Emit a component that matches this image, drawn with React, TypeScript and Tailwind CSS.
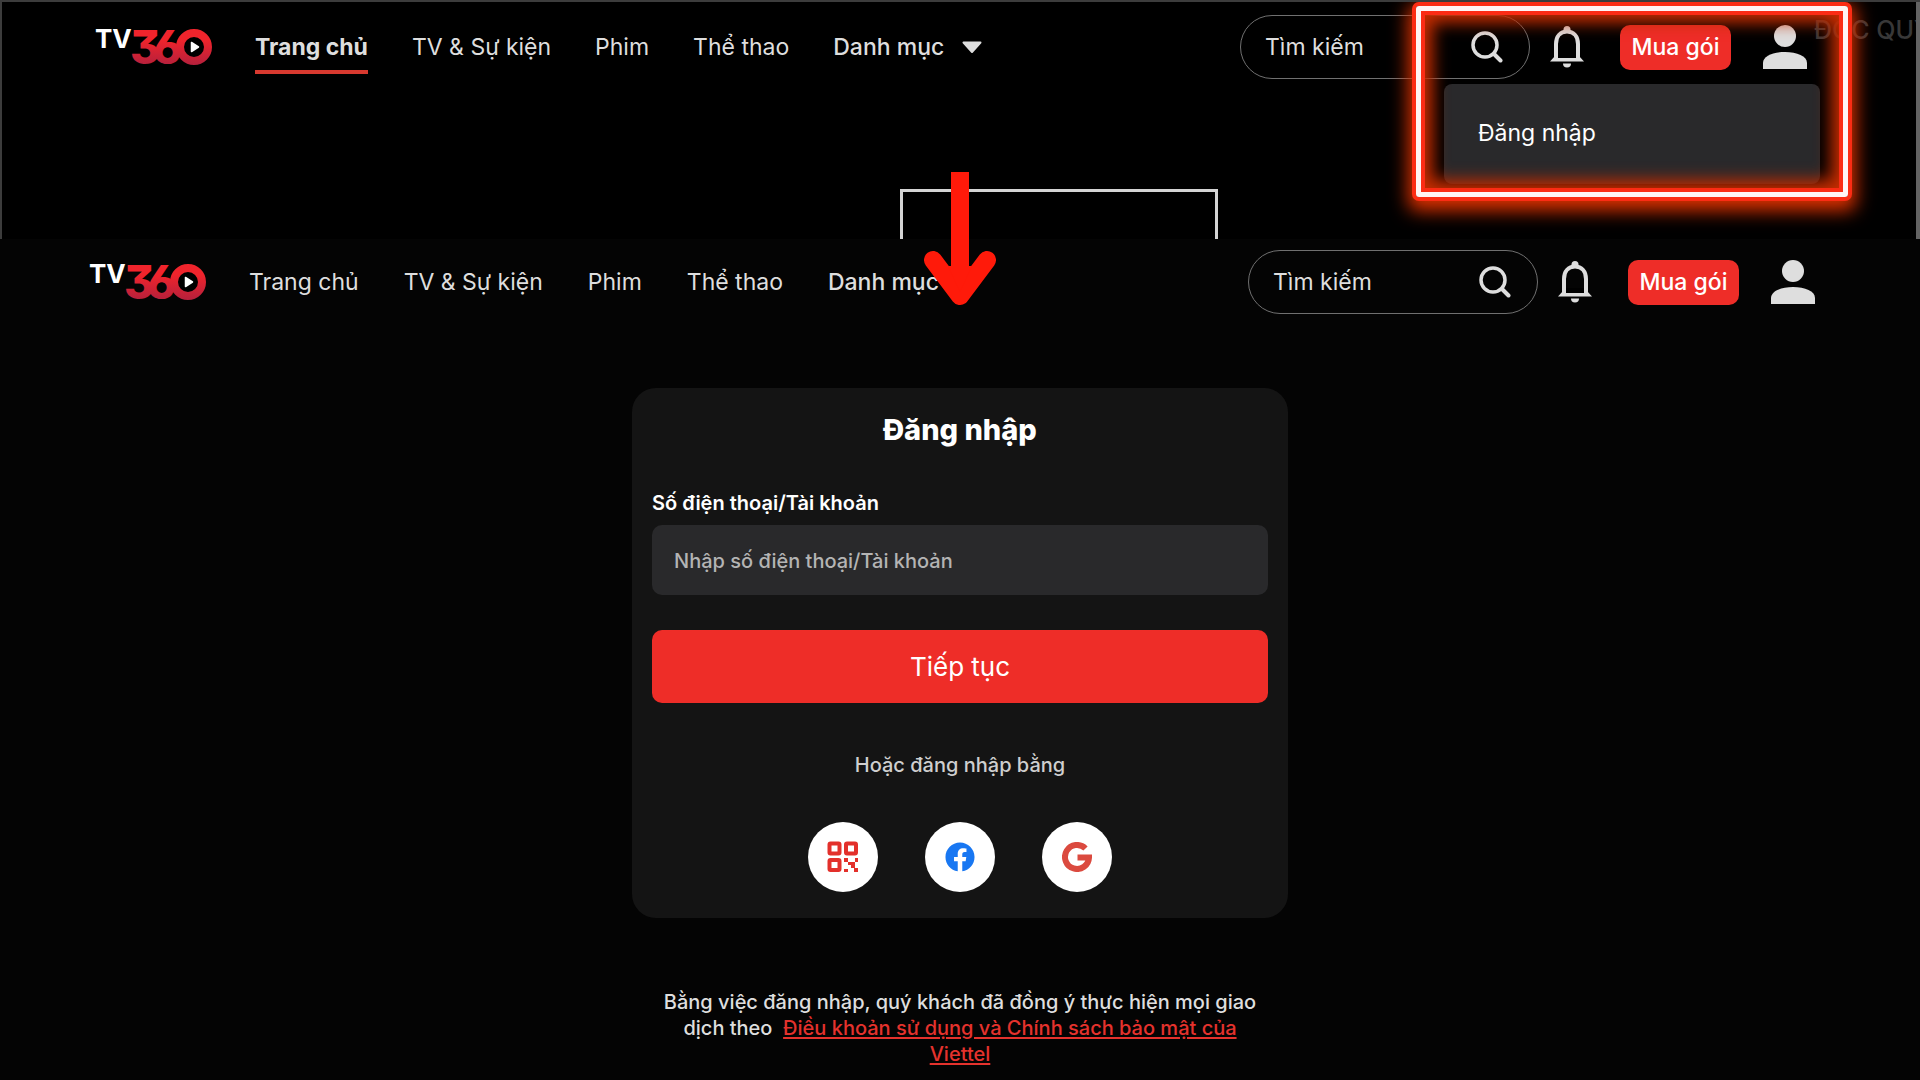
import { FaFacebook } from "react-icons/fa";

interface NavLink {
  label: string;
  strong?: boolean;
}

const links: NavLink[] = [
  { label: "Trang chủ" },
  { label: "TV & Sự kiện" },
  { label: "Phim" },
  { label: "Thể thao" },
  { label: "Danh mục", strong: true },
];

function Logo({ id }: { id: string }) {
  return (
    <svg width="116" height="40" viewBox="0 0 116 40" overflow="visible" role="img" aria-label="TV360">
      <defs>
        <linearGradient id={id} x1="0" y1="2" x2="0" y2="38" gradientUnits="userSpaceOnUse">
          <stop offset="0.3" stopColor="#f0242c" />
          <stop offset="1" stopColor="#b5203c" />
        </linearGradient>
      </defs>
      <text x="-1" y="21" fontFamily="Inter, sans-serif" fontSize="26" fontWeight="700" fill="#fff">
        TV
      </text>
      <text
        x="34 57"
        y="37"
        fontFamily="Inter, sans-serif"
        fontSize="46"
        fontWeight="800"
        fill={`url(#${id})`}
        style={{ fontFeatureSettings: '"cv09", "ss01"' }}
      >
        36
      </text>
      <circle cx="98" cy="20" r="14" fill="#000" stroke={`url(#${id})`} strokeWidth="8" />
      <path d="M95.500 15.500v9l7-4.500z" fill="#fff" stroke="#fff" strokeWidth="1.500" strokeLinejoin="round" />
    </svg>
  );
}

function SearchIcon() {
  return (
    <svg width="32" height="32" viewBox="0 0 32 32" fill="none" stroke="#dedede" aria-hidden="true">
      <circle cx="14" cy="14" r="12" strokeWidth="3.500" />
      <path d="M23 23l6.500 6.500" strokeWidth="4" strokeLinecap="round" />
    </svg>
  );
}

function BellIcon() {
  return (
    <svg width="34" height="42" viewBox="0 0 34 42" fill="none" aria-hidden="true">
      <path
        d="M6 32V18C6 10 10.500 5.500 17 5.500S28 10 28 18v14"
        stroke="#dedede"
        strokeWidth="4"
      />
      <path d="M0 35.500L5 30h24l5 5.500z" fill="#dedede" />
      <path d="M8 27h18v5H8z" fill="#000" />
      <path d="M13.500 6V3.500a3.500 3.500 0 017 0V6z" fill="#dedede" />
      <path d="M13 37.500h8a4 4 0 01-8 0z" fill="#dedede" />
    </svg>
  );
}

function UserIcon() {
  return (
    <svg width="44" height="44" viewBox="0 0 44 44" fill="#dedede" aria-hidden="true">
      <circle cx="22" cy="11" r="11" />
      <path d="M0 44V38C0 31 10 27 22 27s22 4 22 11v6z" />
    </svg>
  );
}

function QrIcon() {
  return (
    <svg width="32" height="32" viewBox="0 0 32 32" aria-hidden="true">
      <g fill="none" stroke="#e3302b" strokeWidth="4">
        <rect x="2.500" y="2.500" width="10" height="10" rx="1" />
        <rect x="19" y="2.500" width="10" height="10" rx="1" />
        <rect x="2.500" y="19" width="10" height="10" rx="1" />
      </g>
      <path
        fill="#e3302b"
        d="M17 17h4v4h-4zM28 17h3v4h-3zM21 21h7v3h-7zM24 24h4v3h-4zM17 28h4v3h-4zM27 27h4v4h-4z"
      />
    </svg>
  );
}

function GoogleIcon() {
  return (
    <svg width="30" height="30" viewBox="0 0 30 30" fill="none" aria-hidden="true">
      <path d="M23.500 6.500A12 12 0 1027 15.500H15.500" stroke="#db4a3f" strokeWidth="6" />
    </svg>
  );
}

function NavBar({ id, active, className }: { id: string; active?: string; className: string }) {
  return (
    <header className={`flex items-center ${className}`}>
      <a href="#home" className="shrink-0">
        <Logo id={id} />
      </a>
      <nav
        className={`ml-[43px] flex items-center text-[23px] leading-7 whitespace-nowrap text-[#dedede] ${
          active ? "gap-11" : "gap-[45px]"
        }`}
      >
        {links.map((link) => (
          <a
            key={link.label}
            href="#menu"
            className={`relative ${
              link.label === active ? "font-bold" : link.strong ? "font-medium" : "font-normal"
            }`}
          >
            {link.label}
            {link.label === active && (
              <span className="absolute inset-x-0 top-[37px] h-1 bg-[#d8392f]" />
            )}
          </a>
        ))}
      </nav>
      <svg className="ml-[18px]" width="20" height="13" viewBox="0 0 20 13" aria-hidden="true">
        <path d="M1.500 1.500h17L10 11z" fill="#dedede" stroke="#dedede" strokeWidth="2" strokeLinejoin="round" />
      </svg>

      <form className="ml-auto flex h-16 w-[290px] items-center rounded-full border border-[#707070] pr-[26px] pl-6">
        <input
          type="text"
          aria-label="Tìm kiếm"
          placeholder="Tìm kiếm"
          className="min-w-0 flex-1 bg-transparent text-[23px] text-[#dedede] outline-none placeholder:text-[#dedede]"
        />
        <button type="button" aria-label="Tìm">
          <SearchIcon />
        </button>
      </form>
      <button type="button" aria-label="Thông báo" className="ml-5">
        <BellIcon />
      </button>
      <button
        type="button"
        className="ml-9 h-[45px] w-[111px] rounded-[10px] bg-[#ee2d28] text-[23px] font-medium whitespace-nowrap text-white"
      >
        Mua gói
      </button>
      <button type="button" aria-label="Tài khoản" className="ml-8">
        <UserIcon />
      </button>
    </header>
  );
}

export default function App() {
  return (
    <div className="relative min-h-screen overflow-hidden bg-[#040404] font-['Inter',sans-serif]">
      <section className="relative h-[239px] overflow-hidden border-t-2 border-l-2 border-[#3c3c3c] bg-black">
        <NavBar id="logoTop" active="Trang chủ" className="pt-[13px] pr-[113px] pl-[94px]" />

        <div className="absolute top-[187px] left-1/2 ml-[-61px] h-20 w-[318px] border-[3px] border-[#d4d4d4]" />
        <span className="absolute top-3 right-0 w-[106px] overflow-hidden text-[25px] leading-8 font-medium whitespace-nowrap text-[#383838]">
          ĐỘC QUY
        </span>
        <div className="absolute top-0 right-0 h-full w-1 bg-[#636363]" />

        <div className="absolute top-[82px] right-[100px] h-[100px] w-[376px] rounded-lg bg-[#29292b] px-[34px] pt-[33px]">
          <a href="#login" className="block text-[23px] leading-8 text-white">
            Đăng nhập
          </a>
        </div>

        {/* neon highlight around the account menu */}
        <div className="pointer-events-none absolute top-1 right-[72px] h-[191px] w-[432px] rounded-[3px] border-[5px] border-[#fff4f4] shadow-[0_0_0_4px_#fb2c14,0_6px_18px_8px_#d93000,inset_0_0_0_4px_#fb2c14,inset_0_0_16px_12px_#c42c00]" />
      </section>

      <NavBar id="logoMain" className="pt-[11px] pr-[105px] pl-[90px]" />

      {/* step arrow */}
      <svg
        className="pointer-events-none absolute top-[172px] left-1/2 ml-[-36px]"
        width="72"
        height="134"
        viewBox="0 0 72 134"
        fill="none"
        stroke="#ff1a0a"
        aria-hidden="true"
      >
        <path d="M36 0v116" strokeWidth="18" />
        <path d="M9 88l27 36 27-36" strokeWidth="18" strokeLinecap="round" strokeLinejoin="round" />
        <path d="M24 94l12 26 12-26z" fill="#ff1a0a" stroke="none" />
      </svg>

      <main className="mx-auto mt-[74px] flex w-[656px] flex-col">
        <form className="flex flex-col rounded-[24px] bg-[#141414] px-5 pt-6 pb-[26px]">
          <h1 className="text-center text-[29px] leading-9 font-extrabold text-white">Đăng nhập</h1>
          <label htmlFor="account" className="mt-[41px] text-[20px] leading-7 font-semibold text-white">
            Số điện thoại/Tài khoản
          </label>
          <input
            id="account"
            type="text"
            placeholder="Nhập số điện thoại/Tài khoản"
            className="mt-2 h-[70px] w-full rounded-[10px] bg-[#29292b] px-[22px] pt-[2px] text-[20px] font-medium text-white outline-none placeholder:text-[#b4b4b4]"
          />
          <button
            type="button"
            className="mt-[35px] h-[73px] w-full rounded-[10px] bg-[#ee2d28] text-[26px] text-white"
          >
            Tiếp tục
          </button>
          <p className="mt-12 text-center text-[20px] leading-7 font-medium text-[#cfcfcf]">
            Hoặc đăng nhập bằng
          </p>
          <div className="mt-[43px] flex justify-center gap-[47px]">
            <button
              type="button"
              aria-label="Mã QR"
              className="flex size-[70px] items-center justify-center rounded-full bg-white"
            >
              <QrIcon />
            </button>
            <button
              type="button"
              aria-label="Facebook"
              className="flex size-[70px] items-center justify-center rounded-full bg-white text-[#1877f2]"
            >
              <FaFacebook size={30} />
            </button>
            <button
              type="button"
              aria-label="Google"
              className="flex size-[70px] items-center justify-center rounded-full bg-white"
            >
              <GoogleIcon />
            </button>
          </div>
        </form>
        <p className="mt-[71px] px-6 text-center text-[20px] leading-[26px] font-medium text-[#dedede]">
          Bằng việc đăng nhập, quý khách đã đồng ý thực hiện mọi giao dịch theo&nbsp;{" "}
          <a href="#terms" className="text-[#e5322d] underline underline-offset-2">
            Điều khoản sử dụng và Chính sách bảo mật của Viettel
          </a>
        </p>
      </main>
    </div>
  );
}
